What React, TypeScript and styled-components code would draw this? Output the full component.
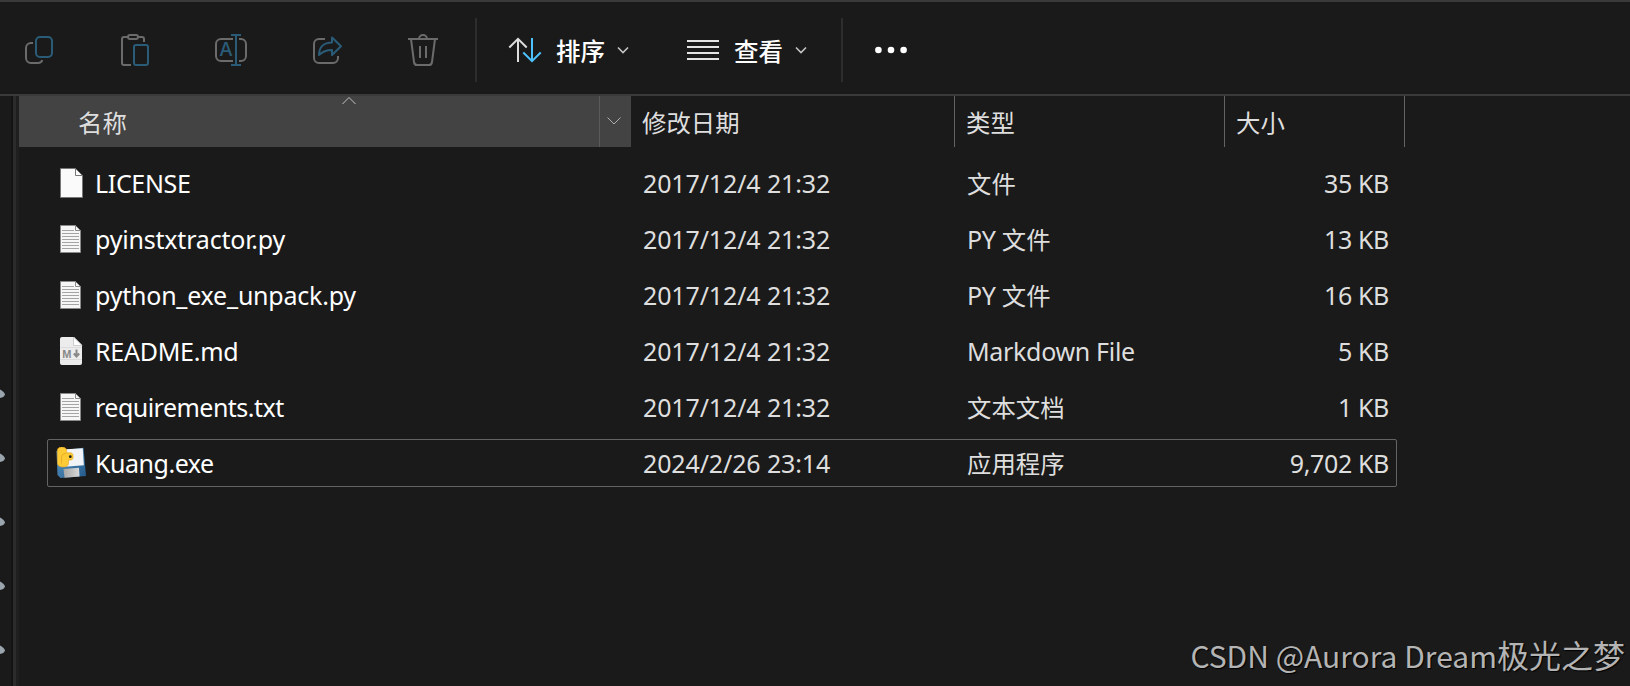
import { ReactNode } from "react";
import styled, { createGlobalStyle } from "styled-components";

const GlobalStyle = createGlobalStyle`
  * {
    box-sizing: border-box;
  }

  body {
    margin: 0;
    background: #1a1a1a;
    overflow: hidden;
  }
`;

const GREY = "#6b6b6b";
const BLUE = "#2a5c78";

const Window = styled.div`
  position: relative;
  display: flex;
  flex-direction: column;
  width: 1630px;
  height: 686px;
  background: #1a1a1a;
  color: #dedede;
  font-family: "Noto Sans", "Noto Sans CJK SC", sans-serif;
  font-size: 25px;
  line-height: 32px;
  white-space: nowrap;
`;

const Toolbar = styled.div`
  display: flex;
  align-items: center;
  height: 96px;
  padding: 4px 0 0 23px;
  border-top: 2px solid #3a3a3a;
  border-bottom: 2px solid #3a3a3a;
`;

const IconGroup = styled.div`
  display: flex;
  gap: 64px;
`;

const Divider = styled.div<{ $left: number; $right: number }>`
  width: 2px;
  height: 64px;
  margin: 0 ${(props) => props.$right}px 0 ${(props) => props.$left}px;
  background: #2d2d2d;
`;

const MenuButton = styled.div`
  display: flex;
  align-items: center;
  color: #fff;
`;

const MenuText = styled.span<{ $left: number }>`
  width: 48px;
  margin: 1px 13px 0 ${(props) => props.$left}px;
  font-family: "Noto Sans CJK SC", sans-serif;
  font-size: 24.5px;
  font-weight: 500;
`;

const Spacer = styled.div<{ $width: number }>`
  width: ${(props) => props.$width}px;
`;

const Icon = styled.svg`
  display: block;
  flex: none;
  fill: none;
`;

const Content = styled.div`
  display: flex;
  flex: 1;
`;

const NavPane = styled.div`
  display: flex;
  flex-direction: column;
  gap: 54px;
  width: 11px;
  padding-top: 293px;
`;

const Splitter = styled.div`
  width: 8px;
  border-left: 2px solid #131313;
  background: linear-gradient(to right, #2c2c2c 3px, #1f1f1f 3px);
`;

const Main = styled.div`
  display: flex;
  flex-direction: column;
  flex: 1;
`;

const HeaderRow = styled.div`
  display: flex;
  height: 51px;
`;

const HeaderCell = styled.div<{ $width: number; $active?: boolean }>`
  display: flex;
  align-items: center;
  width: ${(props) => props.$width}px;
  padding-left: ${(props) => (props.$active ? 59 : 11)}px;
  background: ${(props) => (props.$active ? "#434343" : "transparent")};
  border-right: ${(props) => (props.$active ? "none" : "1px solid #636363")};
`;

const SortCaret = styled.div`
  align-self: flex-start;
  padding-top: 1px;
  margin-left: 215px;
`;

const HeaderDrop = styled.div`
  display: flex;
  align-items: center;
  width: 32px;
  padding: 0 0 2px 7px;
  background: #434343;
  border-left: 1px solid #5a5a5a;
`;

const Rows = styled.div`
  display: flex;
  flex-direction: column;
  gap: 8px;
  padding: 12px 0 0 28px;
`;

const Row = styled.div<{ $focused?: boolean }>`
  display: flex;
  align-items: center;
  width: 1350px;
  height: 48px;
  border: 1px solid ${(props) => (props.$focused ? "#636363" : "transparent")};
  border-radius: 2px;
`;

const FileIcon = styled.div`
  display: flex;
  width: 47px;
  padding-left: 8px;
`;

const NameCell = styled.div<{ $spacing: number }>`
  width: 548px;
  color: #fff;
  letter-spacing: ${(props) => props.$spacing}px;
`;

const DateCell = styled.div`
  width: 324px;
  letter-spacing: -0.13px;
`;

const TypeCell = styled.div`
  width: 269px;
  letter-spacing: -0.32px;
`;

const SizeCell = styled.div`
  width: 153px;
  text-align: right;
  letter-spacing: -0.36px;
`;

const Hanzi = styled.span`
  font-family: "Noto Sans CJK SC", sans-serif;
  font-size: 24.4px;
  letter-spacing: 0;
`;

const Watermark = styled.div`
  position: absolute;
  right: 5px;
  bottom: 11px;
  color: #b4b4b4;
  font-family: "Noto Sans CJK SC", sans-serif;
  font-size: 30px;
  line-height: 40px;
  text-shadow: 1px 1px 1px #000;
`;

const WatermarkHanzi = styled.span`
  font-size: 32px;
`;

// Chinese runs are set slightly smaller than the latin ones
const Label = ({ text }: { text: string }) => (
  <>
    {text
      .split(/([\u4e00-\u9fff]+)/)
      .filter(Boolean)
      .map((part, i) =>
        /[\u4e00-\u9fff]/.test(part) ? <Hanzi key={i}>{part}</Hanzi> : part
      )}
  </>
);

const ToolIcon = ({ x, children }: { x: number; children: ReactNode }) => (
  <Icon width="32" height="32" viewBox={`${x} 34 32 32`} strokeWidth="2">
    {children}
  </Icon>
);

const Chevron = () => (
  <Icon width="12" height="8" viewBox="0 0 12 8" stroke="#c4c4c4" strokeWidth="1.6">
    <path d="M1 1.5l5 5 5-5" />
  </Icon>
);

const BlankIcon = () => (
  <Icon width="32" height="32" viewBox="56 167 32 32">
    <path d="M60.5 168.5h15l7 7v22h-22z" fill="#fafafa" stroke="#777" />
    <path d="M75.5 168.5v7h7" stroke="#777" />
  </Icon>
);

const TextIcon = () => (
  <Icon width="32" height="32" viewBox="56 223 32 32">
    <path d="M60.5 225.5h15l5 5v22h-20z" fill="#f6f6f6" stroke="#8a8a8a" />
    <path d="M75.5 225.5v5h5" stroke="#8a8a8a" />
    <path
      d="M62 230.5h12M62 233.5h17M62 236.5h17M62 239.5h17M62 242.5h17M62 245.5h17M62 248.5h17"
      stroke="#a4a4a4"
    />
  </Icon>
);

const MarkdownIcon = () => (
  <Icon width="32" height="32" viewBox="56 335 32 32">
    <path d="M62 337h12l8 8v18a2 2 0 0 1-2 2h-18a2 2 0 0 1-2-2v-24a2 2 0 0 1 2-2z" fill="#ececec" />
    <path d="M73.5 337l8.500 8.500h-8.500z" fill="#fff" stroke="#c4c4c4" strokeWidth=".8" />
    <path d="M60 347.500h22M60 359.500h22" stroke="#dcdcdc" />
    <text x="62.300" y="357.500" fontSize="11" fontWeight="700" fontFamily="Liberation Sans" fill="#888">
      M
    </text>
    <path d="M76.500 349.500v6M73.800 353.500l2.700 3 2.700-3" stroke="#888" strokeWidth="2" />
  </Icon>
);

const ExeIcon = () => (
  <Icon width="32" height="32" viewBox="56 447 32 32">
    <defs>
      <linearGradient id="disk" x1="0" y1="0" x2="1" y2="1">
        <stop offset="0" stopColor="#5a9bc8" />
        <stop offset="1" stopColor="#23598a" />
      </linearGradient>
      <linearGradient id="shutter" x1="0" y1="0" x2="1" y2="0">
        <stop offset="0" stopColor="#a5a5a5" />
        <stop offset="1" stopColor="#dadada" />
      </linearGradient>
    </defs>
    <path d="M56.500 451l27-3.300 2.500 28.300-25.500 2-3-3z" fill="url(#disk)" />
    <path d="M62 449.500l20.800-1.300 1 17-22 1.800z" fill="#f1f3f6" />
    <path d="M63.500 469l15.500-1.200.5 8.700-15 1.300z" fill="url(#shutter)" />
    <path
      d="M57.300 451c0-3 2.200-4 4.700-4s4.600 1.200 4.600 3.500v2.300h3.400c2 0 3 1.200 3 2.700v2.500c0 1.500-1.500 2-3 2h-1.500v3.500c0 2.300-2.300 3.500-5.500 3.500-3.300 0-5.500-1.300-5.500-4z"
      fill="#fccb35"
      stroke="#e2a11c"
      strokeWidth=".6"
    />
    <path d="M66 453.500c-3 0-4.500 1.500-4.500 4v6" stroke="#e0a01c" strokeWidth=".7" />
    <circle cx="70.300" cy="456.700" r="1.400" fill="#1d1d1d" />
  </Icon>
);

const files = [
  { icon: <BlankIcon />, name: "LICENSE", date: "2017/12/4 21:32", type: "文件", size: "35 KB", spacing: -0.35 },
  { icon: <TextIcon />, name: "pyinstxtractor.py", date: "2017/12/4 21:32", type: "PY 文件", size: "13 KB", spacing: -0.2 },
  { icon: <TextIcon />, name: "python_exe_unpack.py", date: "2017/12/4 21:32", type: "PY 文件", size: "16 KB", spacing: -0.22 },
  { icon: <MarkdownIcon />, name: "README.md", date: "2017/12/4 21:32", type: "Markdown File", size: "5 KB", spacing: -0.25 },
  { icon: <TextIcon />, name: "requirements.txt", date: "2017/12/4 21:32", type: "文本文档", size: "1 KB", spacing: -0.52 },
  { icon: <ExeIcon />, name: "Kuang.exe", date: "2024/2/26 23:14", type: "应用程序", size: "9,702 KB", spacing: -0.46, focused: true },
];

function App() {
  return (
    <Window>
      <GlobalStyle />
      <Toolbar>
        <IconGroup>
          <ToolIcon x={23}>
            <path d="M33 43h-2a5 5 0 0 0-5 5v10a5 5 0 0 0 5 5h7q3.500 0 4.200-3" stroke={GREY} />
            <rect x="36" y="37" width="16" height="20" rx="4" stroke={BLUE} />
          </ToolIcon>
          <ToolIcon x={119}>
            <path d="M128 37h-4a2 2 0 0 0-2 2v24a2 2 0 0 0 2 2h7M138 37h4a2 2 0 0 1 2 2v3" stroke={GREY} />
            <rect x="128" y="35" width="10" height="4" rx="2" stroke={GREY} />
            <rect x="134" y="45" width="14" height="20" rx="2" stroke={BLUE} />
          </ToolIcon>
          <ToolIcon x={215}>
            <path d="M233 39h-12a5 5 0 0 0-5 5v12a5 5 0 0 0 5 5h12M239 39h2a5 5 0 0 1 5 5v12a5 5 0 0 1-5 5h-2" stroke={GREY} />
            <path d="M231 35h10M231 65h10M236 35v30" stroke={BLUE} />
            <text x="219.300" y="56" fontSize="19" fontFamily="Inter" fontWeight="500" fill={BLUE}>
              A
            </text>
          </ToolIcon>
          <ToolIcon x={311}>
            <path d="M325 39h-6a5 5 0 0 0-5 5v14a5 5 0 0 0 5 5h14a5 5 0 0 0 5-5v-2" stroke={GREY} />
            <path d="M332 37.500l9 8.700-9 8.800v-5c-6 0-9 1-13 5 0-8 5-12.500 13-12.500z" stroke={BLUE} strokeLinejoin="round" />
          </ToolIcon>
          <ToolIcon x={407}>
            <path d="M408 39h30M419 39a4 4 0 0 1 8 0M411 39l3 23q.4 3 3 3h12q2.600 0 3-3l3-23M420 46v12M426 46v12" stroke={GREY} />
          </ToolIcon>
        </IconGroup>
        <Divider $left={36} $right={31} />
        <MenuButton>
          <Icon width="34" height="26" viewBox="508 37 34 26" strokeWidth="2">
            <path d="M518 62v-23M509.300 47.500l8.700-8.700 8.700 8.700" stroke="#dedede" />
            <path d="M532 38v23M523.300 52.500l8.700 8.700 8.700-8.700" stroke="#4cc2ff" />
          </Icon>
          <MenuText $left={14}>排序</MenuText>
          <Chevron />
        </MenuButton>
        <Spacer $width={58} />
        <MenuButton>
          <Icon width="32" height="20" viewBox="0 0 32 20" stroke="#e4e4e4" strokeWidth="2">
            <path d="M0 1h32M0 7h32M0 13h32M0 19h32" />
          </Icon>
          <MenuText $left={15}>查看</MenuText>
          <Chevron />
        </MenuButton>
        <Divider $left={34} $right={31} />
        <Icon width="34" height="8" viewBox="874 46 34 8" fill="none">
          <g fill="#fff">
            <circle cx="878.400" cy="50" r="3.300" />
            <circle cx="891" cy="50" r="3.300" />
            <circle cx="903.600" cy="50" r="3.300" />
          </g>
        </Icon>
      </Toolbar>

      <Content>
        <NavPane>
          {[0, 1, 2, 3, 4].map((n) => (
            <Icon key={n} width="5" height="10" viewBox="0 0 5 10">
              <path d="M0 0.500q4.500 2.500 5 5-1 3-5 3.500z" fill="#9aa5ae" />
            </Icon>
          ))}
        </NavPane>
        <Splitter />
        <Main>
          <HeaderRow>
            <HeaderCell $width={580} $active>
              <Label text="名称" />
              <SortCaret>
                <Icon width="14" height="8" viewBox="0 0 14 8" stroke="#c4c4c4">
                  <path d="M.5 7l6.500-6.500 6.500 6.500" />
                </Icon>
              </SortCaret>
            </HeaderCell>
            <HeaderDrop>
              <Icon width="14" height="8" viewBox="0 0 14 8" stroke="#b0b0b0">
                <path d="M.5 .5l6.500 6.500 6.500-6.500" />
              </Icon>
            </HeaderDrop>
            <HeaderCell $width={324}>
              <Label text="修改日期" />
            </HeaderCell>
            <HeaderCell $width={270}>
              <Label text="类型" />
            </HeaderCell>
            <HeaderCell $width={180}>
              <Label text="大小" />
            </HeaderCell>
          </HeaderRow>
          <Rows>
            {files.map((file) => (
              <Row key={file.name} $focused={file.focused}>
                <FileIcon>{file.icon}</FileIcon>
                <NameCell $spacing={file.spacing}>{file.name}</NameCell>
                <DateCell>{file.date}</DateCell>
                <TypeCell>
                  <Label text={file.type} />
                </TypeCell>
                <SizeCell>{file.size}</SizeCell>
              </Row>
            ))}
          </Rows>
        </Main>
      </Content>
      <Watermark>
        CSDN @Aurora Dream<WatermarkHanzi>极光之梦</WatermarkHanzi>
      </Watermark>
    </Window>
  );
}

export default App;
